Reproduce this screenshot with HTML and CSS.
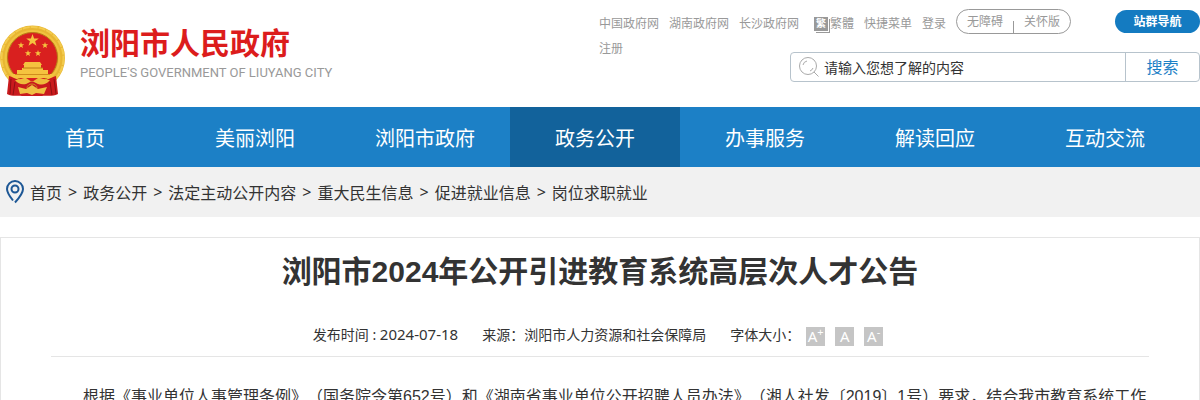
FILE: index.html
```html
<!DOCTYPE html>
<html lang="zh-CN">
<head>
    <meta charset="UTF-8">
    <meta name="viewport" content="width=device-width, initial-scale=1.0">
    <title>浏阳市2024年公开引进教育系统高层次人才公告</title>
    <link rel="stylesheet" href="styles.css">
</head>
<body>
    <header class="header">
        <a class="logo" href="#">
            <svg class="emblem" viewBox="0 0 66 72" aria-hidden="true">
                <circle cx="32.500" cy="33" r="32.500" fill="#e8b632"/>
                <circle cx="32.500" cy="33" r="31" fill="none" stroke="#f3cb4d" stroke-width="2" stroke-dasharray="7 1"/>
                <circle cx="32.500" cy="33" r="27" fill="none" stroke="#f0c340" stroke-width="2"/>
                <circle cx="32.500" cy="32.500" r="25" fill="#d9201f" stroke="#b97a17" stroke-width="1"/>
                <g fill="#f5c33f">
                    <path d="M32.500 9l1.600 4.400h4.700l-3.700 2.900 1.400 4.500-4-2.700-4 2.700 1.400-4.500-3.700-2.900h4.700z"/>
                    <path d="M21 17l.8 2.300h2.400l-1.900 1.500.7 2.300-2-1.400-2 1.400.7-2.300-1.900-1.500h2.400z"/>
                    <path d="M45 17l.8 2.300h2.400l-1.900 1.500.7 2.300-2-1.400-2 1.400.7-2.300-1.900-1.500h2.400z"/>
                    <path d="M28 25l.8 2.300h2.400l-1.900 1.500.7 2.300-2-1.400-2 1.400.7-2.300-1.900-1.500h2.400z"/>
                    <path d="M38 25l.8 2.300h2.400l-1.900 1.500.7 2.300-2-1.400-2 1.400.7-2.300-1.900-1.500h2.400z"/>
                    <path d="M25 37h15l2 3h-1v3h2v5h-21v-5h2v-3h-1z"/>
                    <path d="M17 45h31v4h5l1 4H11l1-4h5z"/>
                </g>
                <path d="M23 43h20" stroke="#bd7d16" stroke-width="1"/>
                <path d="M15 49.500h35" stroke="#d08e1d" stroke-width="1"/>
                <path d="M9 51c7 2 9 5 15 5h17c6 0 8-3 15-5l2 18c-6 3-12 1-16 2H22c-5-1-9 1-15-2z" fill="#c91a1d"/>
                <path d="M11 54l-1 15M15 57l-2 13M54 54l2 15M50 57l2 13" stroke="#8e1013" stroke-width="1"/>
                <path d="M15 55c6 0 6-2 11-2l6 4 6-4c5 0 6 2 12 2-4 5-8 5-12 4l-6-3-6 3c-4 1-8 0-11-4z" fill="#eebb3c"/>
                <path d="M18 62l8 2 6-4 6 4 9-2-3 7-8-1-4 2-5-2-7 1z" fill="#f0c044"/>
                <path d="M27 63a5 4 0 0 1 10 0" fill="none" stroke="#c98a20" stroke-width="1"/>
            </svg>
            <span class="logo-text">
                <strong class="logo-name">浏阳市人民政府</strong>
                <span class="logo-en">PEOPLE'S GOVERNMENT OF LIUYANG CITY</span>
            </span>
        </a>

        <div class="header-right">
            <div class="top-bar">
                <div class="top-links">
                    <a href="#">中国政府网</a>
                    <a href="#">湖南政府网</a>
                    <a href="#">长沙政府网</a>
                    <a class="trad" href="#"><span class="trad-icon">繁</span>繁體</a>
                    <a href="#">快捷菜单</a>
                    <a href="#">登录</a>
                    <a href="#">注册</a>
                </div>
                <div class="care">
                    <a href="#">无障碍</a>
                    <span class="care-line"></span>
                    <a href="#">关怀版</a>
                </div>
                <a class="site-nav" href="#">站群导航</a>
            </div>
            <form class="search">
                <svg class="search-icon" viewBox="0 0 22 22" aria-hidden="true">
                    <circle cx="10" cy="10" r="8.500"/>
                    <path d="M5 9a5 5 0 0 1 4-4M12 15a5 5 0 0 0 3-3M16 16l4.500 4.500"/>
                </svg>
                <input class="search-input" type="text" value="请输入您想了解的内容" aria-label="搜索内容">
                <button class="search-btn" type="submit">搜索</button>
            </form>
        </div>
    </header>

    <nav class="nav">
        <a href="#">首页</a>
        <a href="#">美丽浏阳</a>
        <a href="#">浏阳市政府</a>
        <a class="active" href="#">政务公开</a>
        <a href="#">办事服务</a>
        <a href="#">解读回应</a>
        <a href="#">互动交流</a>
    </nav>

    <div class="crumbs">
        <svg class="pin" viewBox="0 0 18 24" aria-hidden="true">
            <path d="M7 20.500C3 15.500 1 12.500 1 9a8 8 0 0 1 16 0c0 4-3 8-8 13.500"/>
            <circle cx="9" cy="9" r="3.500"/>
        </svg>
        <a href="#">首页</a>
        <span>&gt;</span>
        <a href="#">政务公开</a>
        <span>&gt;</span>
        <a href="#">法定主动公开内容</a>
        <span>&gt;</span>
        <a href="#">重大民生信息</a>
        <span>&gt;</span>
        <a href="#">促进就业信息</a>
        <span>&gt;</span>
        <a href="#">岗位求职就业</a>
    </div>

    <main class="article">
        <h1>浏阳市2024年公开引进教育系统高层次人才公告</h1>
        <div class="meta">
            <span>发布时间 : <span class="date">2024-07-18</span></span>
            <span>来源：浏阳市人力资源和社会保障局</span>
            <div class="font-size">
                <span class="font-label">字体大小：</span>
                <button type="button">A<sup>+</sup></button>
                <button type="button">A</button>
                <button type="button">A<sup>-</sup></button>
            </div>
        </div>
        <div class="content">
            <p>根据《事业单位人事管理条例》（国务院令第652号）和《湖南省事业单位公开招聘人员办法》（湘人社发〔2019〕1号）要求，结合我市教育系统工作</p>
        </div>
    </main>
</body>
</html>
```
FILE: styles.css
```css
body, h1, p {
    margin: 0;
    padding: 0;
}

* {
    box-sizing: border-box;
}

body {
    font-family: "Noto Sans", "Noto Sans CJK SC", sans-serif;
    font-size: 14px;
    color: #333;
    background-color: #fff;
}

a {
    color: inherit;
    text-decoration: none;
}

/* Header */
.header {
    display: flex;
    justify-content: space-between;
    height: 107px;
}

.logo {
    display: flex;
    align-items: flex-start;
    gap: 14px;
    padding-top: 25px;
}

.emblem {
    width: 66px;
    height: 72px;
}

.logo-text {
    display: flex;
    flex-direction: column;
}

.logo-name {
    font-size: 30px;
    line-height: 36px;
    color: #dc1c1c;
}

.logo-en {
    font-family: Roboto, sans-serif;
    font-size: 13px;
    line-height: 24px;
    color: #999;
}

.header-right {
    display: flex;
    flex-direction: column;
    align-items: flex-end;
    width: 601px;
}

.top-bar {
    display: flex;
    align-items: flex-start;
    width: 100%;
    height: 52px;
    padding-top: 9px;
    font-size: 12px;
    color: #999;
}

.top-links {
    display: flex;
    flex-wrap: wrap;
    column-gap: 10px;
    width: 357px;
    padding-top: 2px;
    line-height: 25px;
}

.trad {
    display: flex;
    align-items: center;
    margin-left: 5px;
}

.trad-icon {
    width: 14px;
    height: 14px;
    margin-right: 2px;
    box-shadow: 1px 1px #fff, 2px 2px #999;
    background-color: #999;
    color: #fff;
    font-size: 10px;
    font-weight: bold;
    line-height: 13px;
    text-align: center;
}

.care {
    display: flex;
    justify-content: center;
    gap: 10px;
    width: 115px;
    height: 25px;
    border: 1px solid #999;
    border-radius: 13px;
    line-height: 24px;
}

.care-line {
    width: 1px;
    height: 12px;
    margin-top: 11px;
    background-color: #999;
}

.site-nav {
    width: 85px;
    margin-top: 1px;
    margin-left: auto;
    border-radius: 12px;
    background-color: #147bc1;
    color: #fff;
    font-weight: bold;
    line-height: 23px;
    text-align: center;
}

.search {
    display: flex;
    align-items: center;
    width: 410px;
    height: 30px;
    border: 1px solid #b7c3cc;
    border-radius: 4px;
}

.search-icon {
    width: 22px;
    height: 22px;
    margin-left: 7px;
    fill: none;
    stroke: #aaa;
}

.search-input {
    flex: 1;
    min-width: 0;
    padding: 0 4px;
    border: 0;
    background: none;
    font: inherit;
    color: #333;
}

.search-btn {
    width: 74px;
    height: 28px;
    padding: 0;
    border: 0;
    border-left: 1px solid #b7c3cc;
    background: none;
    font-family: inherit;
    font-size: 16px;
    line-height: 28px;
    color: #1c80c6;
}

/* Main navigation */
.nav {
    display: flex;
    background-color: #1c80c6;
}

.nav a {
    width: 170px;
    padding-top: 4px;
    font-size: 20px;
    line-height: 56px;
    color: #fff;
    text-align: center;
}

.nav .active {
    background-color: #12629b;
}

/* Breadcrumbs */
.crumbs {
    display: flex;
    align-items: center;
    gap: 6px;
    height: 50px;
    padding-left: 6px;
    background-color: #f1f1f1;
    font-size: 16px;
}

.pin {
    width: 18px;
    height: 24px;
    fill: none;
    stroke: #1d5795;
    stroke-width: 2;
}

/* Article */
.article {
    margin-top: 20px;
    padding: 0 50px 40px;
    border: 1px solid #e5e5e5;
}

.article h1 {
    padding-top: 10px;
    font-family: "Liberation Sans", "Noto Sans CJK SC", sans-serif;
    font-size: 30px;
    line-height: 48px;
    text-align: center;
}

.meta {
    display: flex;
    justify-content: center;
    gap: 24px;
    padding: 18px 4px 0 0;
    border-bottom: 1px solid #e5e5e5;
    line-height: 42px;
}

.date {
    font-size: 15px;
    line-height: 1;
}

.font-size {
    display: flex;
    align-items: center;
}

.font-label {
    margin-right: 6px;
}

.font-size button {
    width: 19px;
    height: 19px;
    margin-top: 2px;
    padding: 0;
    border: 0;
    background-color: #c5c5c5;
    font-family: inherit;
    font-size: 15px;
    line-height: 19px;
    color: #fff;
}

.font-size button + button {
    margin-left: 10px;
}

.font-size sup {
    font-size: 11px;
    line-height: 0;
}

.content {
    padding-top: 24px;
    font-family: "Liberation Sans", "Noto Sans CJK SC", sans-serif;
    font-size: 16px;
    line-height: 32px;
}

.content p {
    text-indent: 2em;
    text-spacing-trim: space-all;
}
```
